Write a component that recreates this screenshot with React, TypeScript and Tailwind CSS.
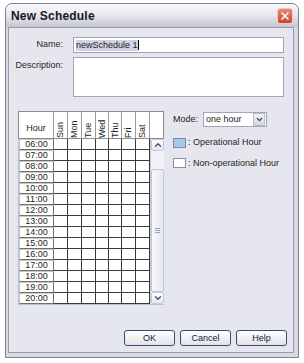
import { ChevronDown, ChevronUp, X } from 'lucide-react';

const hours = ['06:00', '07:00', '08:00', '09:00', '10:00', '11:00', '12:00', '13:00', '14:00', '15:00', '16:00', '17:00', '18:00', '19:00', '20:00'];

const days = [
  { label: 'Sun', w: 'w-[14px]' },
  { label: 'Mon', w: 'w-[14px]' },
  { label: 'Tue', w: 'w-[14px]' },
  { label: 'Wed', w: 'w-[13px]' },
  { label: 'Thu', w: 'w-[13px]' },
  { label: 'Fri', w: 'w-[14px]' },
  { label: 'Sat', w: 'w-[14px]' },
];

const XpButton = ({ label }: { label: string }) => (
  <button className="w-[51px] h-[16px] rounded-[3px] border border-[#3a4a6e] bg-gradient-to-b from-white to-[#e2e2ea] text-[9px] text-[#222] leading-none">
    {label}
  </button>
);

const App = () => {
  return (
    <div className="w-[304px] h-[363px] bg-white pt-[3px] pl-[5px] font-['Liberation_Sans',Arial,sans-serif] text-[#1e1e1e]">
      <div className="w-[294px] h-[355px] border border-[#7c7c92] rounded-t-[7px] bg-[#d9d9e3] flex flex-col">
        {/* title bar */}
        <div className="h-[23px] flex items-center justify-between pl-[5px] pr-[5px] rounded-t-[6px] bg-gradient-to-b from-[#f8f8fb] via-[#e6e6ee] to-[#c6c6d4]">
          <span className="text-[12px] font-bold text-[#161620] tracking-[0.2px]">New Schedule</span>
          <div className="w-[16px] h-[16px] rounded-[3px] border border-[#f0c8c0] bg-gradient-to-b from-[#e88a78] to-[#c8432e] flex items-center justify-center">
            <X size={12} strokeWidth={3} className="text-white" />
          </div>
        </div>

        {/* client */}
        <div className="ml-[2px] mr-[4px] h-[326px] border border-[#9c9cb0] bg-[#e6e6ee] flex flex-col">
          <div className="mt-[9px] flex items-center">
            <div className="w-[54px] text-right text-[9px]">Name:</div>
            <div className="ml-[10px] w-[211px] h-[16px] bg-white border border-[#a4a4b8] flex items-center px-[2px] text-[9px]">
              <span className="bg-[#d2d2e6] leading-[11px]">newSchedule 1</span>
              <span className="w-px h-[10px] bg-black"></span>
            </div>
          </div>

          <div className="mt-[4px] flex items-start">
            <div className="w-[54px] text-right text-[9px] pt-[2px]">Description:</div>
            <div className="ml-[10px] w-[211px] h-[40px] bg-white border border-[#a4a4b8]"></div>
          </div>

          <div className="mt-[14px] ml-[9px] flex items-start">
            {/* schedule table */}
            <div className="w-[146px] flex flex-col">
              <div className="h-[28px] flex bg-white border border-[#8a8a8a]">
                <div className="w-[35px] border-r border-[#9a9a9a] flex items-end justify-center pb-[3px] text-[9px]">Hour</div>
                {days.map((d) => (
                  <div key={d.label} className={`${d.w} border-r border-[#9a9a9a] flex justify-center pt-[2px]`}>
                    <span className="[writing-mode:vertical-rl] rotate-180 text-[9px] leading-[11px]">{d.label}</span>
                  </div>
                ))}
                <div className="flex-1"></div>
              </div>

              <div className="flex border-l border-b border-[#b4c4dc]">
                <div className="flex flex-col">
                  {hours.map((h) => (
                    <div key={h} className="h-[11px] flex">
                      <div className="w-[35px] bg-white border-t border-l border-[#c8c8c8] border-b border-r border-b-[#707070] border-r-[#707070] flex items-center justify-center text-[9px] leading-none">
                        {h}
                      </div>
                      {days.map((d) => (
                        <div key={d.label} className={`${d.w} bg-white border-r border-b border-[#3a3a3a]`}></div>
                      ))}
                    </div>
                  ))}
                </div>

                {/* scrollbar */}
                <div className="w-[14px] h-[165px] bg-[#f2f2f6] border-l border-[#c4cce0] flex flex-col">
                  <div className="h-[12px] bg-gradient-to-b from-white to-[#e4e6f0] border border-[#c0c8dc] rounded-[2px] flex items-center justify-center">
                    <ChevronUp size={10} strokeWidth={3} className="text-[#4a4a5a]" />
                  </div>
                  <div className="h-[18px]"></div>
                  <div className="flex-1 bg-gradient-to-r from-[#f8f8fc] to-[#e6e8f2] border border-[#c0c8dc] rounded-[2px] flex flex-col items-center justify-center gap-[1px]">
                    <div className="w-[5px] h-px bg-[#9aa0b4]"></div>
                    <div className="w-[5px] h-px bg-[#9aa0b4]"></div>
                    <div className="w-[5px] h-px bg-[#9aa0b4]"></div>
                  </div>
                  <div className="h-[12px] bg-gradient-to-b from-white to-[#e4e6f0] border border-[#c0c8dc] rounded-[2px] flex items-center justify-center">
                    <ChevronDown size={10} strokeWidth={3} className="text-[#4a4a5a]" />
                  </div>
                </div>
              </div>
            </div>

            {/* mode and legend */}
            <div className="ml-[9px] flex flex-col">
              <div className="mt-[1px] flex items-center">
                <span className="w-[30px] text-[9px]">Mode:</span>
                <div className="w-[64px] h-[15px] bg-white border border-[#a4a4b8] flex items-center">
                  <span className="flex-1 pl-[2px] text-[9px]">one hour</span>
                  <div className="w-[12px] h-[13px] mr-px bg-gradient-to-b from-[#f4f4f8] to-[#d4d6e2] border border-[#b8bccc] flex items-center justify-center">
                    <ChevronDown size={9} strokeWidth={3.5} className="text-[#3a3a4a]" />
                  </div>
                </div>
              </div>
              <div className="mt-[9px] flex items-center">
                <div className="w-[13px] h-[10px] bg-[#a8c6e6] border border-[#7c8ca8]"></div>
                <span className="ml-[2px] text-[9px]">: Operational Hour</span>
              </div>
              <div className="mt-[7px] flex items-center">
                <div className="w-[13px] h-[10px] bg-white border border-[#8c8c9c]"></div>
                <span className="ml-[2px] text-[9px]">: Non-operational Hour</span>
              </div>
            </div>
          </div>

          <div className="mt-auto mb-[6px] mr-[6px] flex justify-end gap-[5px]">
            <XpButton label="OK" />
            <XpButton label="Cancel" />
            <XpButton label="Help" />
          </div>
        </div>
      </div>
    </div>
  );
};

export default App;
